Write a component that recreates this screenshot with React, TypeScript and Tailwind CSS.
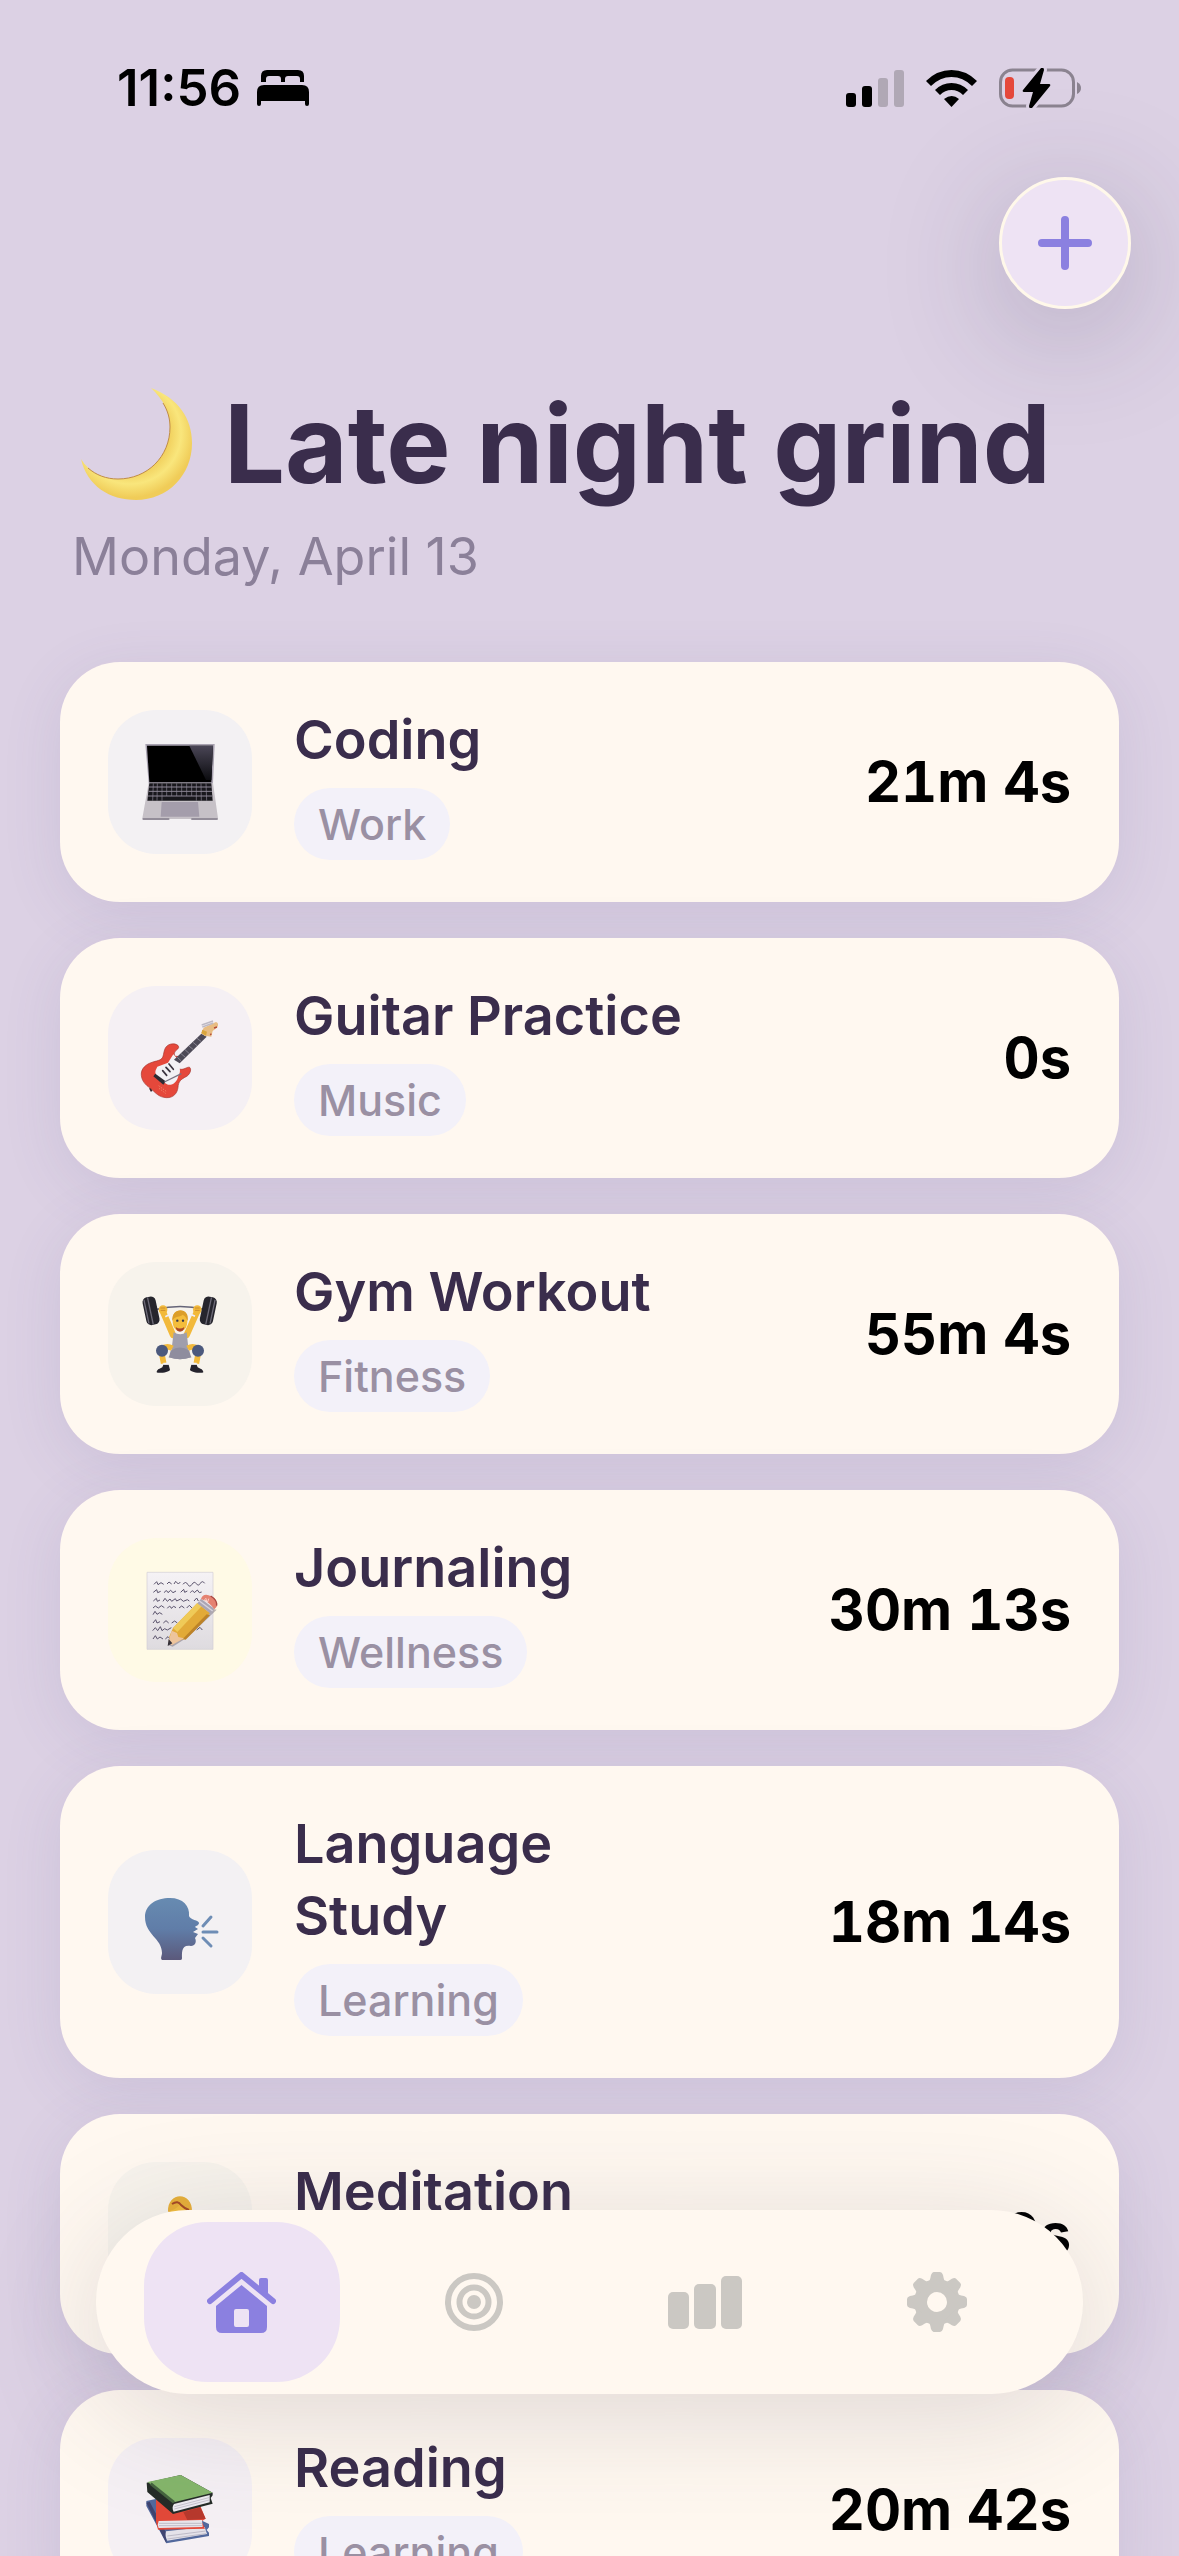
import type { ReactNode } from "react";

function Laptop() {
  return (
    <svg viewBox="24 30 432 432" className="size-full" aria-hidden="true">
      <defs>
        <linearGradient id="glare" x1="0" y1="0" x2="0" y2="1">
          <stop offset="0" stopColor="#4a4656" />
          <stop offset="1" stopColor="#0c0c10" />
        </linearGradient>
      </defs>
      <path d="M136 132h208l-5 118H146z" fill="#a9a3b1" />
      <path d="M141 137h198l-5 110H148z" fill="#000" />
      <path d="M268 137h71l-5 103h-16z" fill="url(#glare)" />
      <path d="M146 249h193l15 106c0 3-2 5-5 5h-72l-6-3h-62l-6 3h-71c-3 0-5-2-5-5z" fill="#c6c1c7" />
      <path d="M148 250h186l4 52H142z" fill="#18171c" />
      <path d="M147 261h188M146 274h190M144 288h192" stroke="#8d8796" strokeWidth="3" />
      <path d="M160 250l-2 52M172 250l-1 52M186 250v52M200 250v38M215 250v38M230 250v38M245 250v38M260 250v38M275 250v38M289 250v52M303 250l1 52M318 250l2 52" stroke="#8d8796" strokeWidth="2" />
      <path d="M185 306h109l4 44H182z" fill="#a49dab" />
      <path d="M128 357h80M274 357h79" stroke="#827c8b" strokeWidth="4" />
    </svg>
  );
}

function Guitar() {
  return (
    <svg viewBox="24 48 432 432" className="size-full" aria-hidden="true">
      <path d="M150 354l5 10M205 360l8 10" stroke="#33272d" strokeWidth="6" />
      <path d="M236 232c0-10-17-13-29-8-15 7-14 22-18 35-4 12-14 12-30 17-22 6-37 21-35 40 2 22 19 33 31 42 11 10 22 24 44 25 22 1 33-14 35-31 1-18 9-24 24-32 11-5 17-20 12-27-5-5-15 5-26 5-14 0-19-13-17-22 2-8 11-8 9-14-2-7-14 3-13-12 1-9 11-10 13-18z" fill="#e5483b" stroke="#a4372f" strokeWidth="2" />
      <path d="M172 290l32-12 16-25 18 20c-3 17 8 30-3 44-3 18-16 29-31 27-17-7-44-28-37-43z" fill="#f2f1f4" />
      <path d="M222 269l82-78 16 9-81 80z" fill="#4d4a57" />
      <path d="M232 262l11 10M243 251l12 10M255 239l12 11M267 228l12 10M279 217l12 10M291 205l12 9" stroke="#918e9b" strokeWidth="2.5" />
      <path d="M304 190l7-17 37-17c9 2 7 15 1 19l-11 8-4 17-20-3z" fill="#e8bd83" />
      <path d="M304 190l3-11 14 6-3 12z" fill="#d9a63d" />
      <path d="M305 165l34-12M307 171l33-12" stroke="#bdb9c4" strokeWidth="4" />
      <path d="M342 174l9-3M331 195l3-4" stroke="#b44a38" strokeWidth="4" />
      <path d="M188 302l12 14M198 292l12 13M207 282l13 16" stroke="#3b3540" strokeWidth="5" strokeLinecap="round" />
      <path d="M166 311l31 23-7 10-30-25z" fill="#2d2b33" />
      <path d="M193 336l51-25" stroke="#777280" strokeWidth="4" />
      <path d="M176 347l24 18M177 355l21 16" stroke="#f08368" strokeWidth="3" strokeDasharray="4 4" />
    </svg>
  );
}

function Lifter() {
  return (
    <svg viewBox="24 66 432 432" className="size-full" aria-hidden="true">
      <path d="M170 208q70-17 142 0" fill="none" stroke="#656478" strokeWidth="5" />
      <path d="M188 213l31 72M292 213l-32 72" stroke="#f2b93b" strokeWidth="19" strokeLinecap="round" />
      <path d="M196 230l10-5M285 229l-10-5" stroke="#eef" strokeWidth="5" />
      <path d="M221 277q20 12 39 0l7 65 8 10q-35 11-70 0l8-10z" fill="#a09eac" />
      <path d="M217 325q-18-10-34 4l8 41M263 325q18-10 34 4l-8 41" fill="none" stroke="#f2b93b" strokeWidth="17" />
      <path d="M212 332q28-19 56 0l5 20q-33 12-66 0z" fill="#8f8d9e" />
      <circle cx="186" cy="332" r="18" fill="#4c597d" />
      <circle cx="294" cy="332" r="18" fill="#4c597d" />
      <path d="M190 374h16l4 15c-1 8-35 12-40 8 0-9 10-11 17-15zM290 374h-16l-4 15c1 8 35 12 40 8 0-9-10-11-17-15z" fill="#25232d" />
      <path d="M190 371h16M274 371h16" stroke="#f4f2f6" strokeWidth="5" />
      <path d="M219 230c1-24 40-24 42 0 4 24-3 43-21 43s-25-20-21-43z" fill="#f4bd3c" />
      <path d="M217 243c-4-42 54-43 46 0-4-8-6-15-15-19-6 8-24 2-31 19z" fill="#dc9e29" />
      <circle cx="232" cy="242" r="3.5" fill="#37384b" />
      <circle cx="249" cy="242" r="3.5" fill="#37384b" />
      <path d="M227 261q13 9 26 0-2 14-13 14t-13-14z" fill="#a9452b" />
      <circle cx="189" cy="209" r="13" fill="#f2b93b" />
      <circle cx="292" cy="209" r="13" fill="#f2b93b" />
      <path d="M181 204h15M182 211h14M285 204h14M285 211h14" stroke="#b97624" strokeWidth="2" />
      <g transform="rotate(-12 153 212)">
        <rect x="133" y="170" width="40" height="85" rx="15" fill="#26252d" />
        <path d="M139 176v72M151 171v83" stroke="#6d6a77" strokeWidth="4" />
      </g>
      <g transform="rotate(12 325 212)">
        <rect x="305" y="170" width="40" height="85" rx="15" fill="#26252d" />
        <path d="M326 171v83M338 176v72" stroke="#6d6a77" strokeWidth="4" />
      </g>
    </svg>
  );
}

function Memo() {
  const rows = [
    "M162 193l8-8 4 9 9-6 8 5 M201 192l6-6 8 6 M222 192l5-8 8 8 6-6 M249 193q8-11 14 0t13 0 13-2 12-1 13 0",
    "M160 217l10-8 3 9 9-4 M193 218q6-12 11 0l8-7 7 7 9-5 M242 217l9-9 3 9 8-4 M271 218q7-11 12 0l9-8 6 8 7-2",
    "M160 243l9-8 3 9 8-4 M189 244l6-9 7 9 8-7 5 7 11-8 4 7 12-6 8 7 12-5 6 4 M282 243l8-9 5 9",
    "M159 264l7-6 9 6 9-7 9 6 M202 265q8-12 12 0l7-6 7 4 M237 264l8-6 8 6 M260 264l8-8 8 8",
    "M159 284l6-10 6 9 8-5 8 5",
    "M159 309l8-10 4 10 9-4 M190 309l8-7 8 7 M215 309l9-6 8 6",
    "M158 332l8-9 7 9 8-12 5 12 8-6 8 4 12-7 M290 330l10-8 7 8",
    "M159 357l7-10 6 10 8-6 9 6 M196 357l8-7 7 7",
  ];
  return (
    <svg viewBox="24 54 432 432" className="size-full" aria-hidden="true">
      <defs>
        <linearGradient id="sheet" x1="0" y1="0" x2="0" y2="1">
          <stop offset="0" stopColor="#f5f2f5" />
          <stop offset="1" stopColor="#dedbdf" />
        </linearGradient>
      </defs>
      <path d="M141 157h198v231H141z" fill="url(#sheet)" stroke="#d2cdd4" strokeWidth="2" />
      <path d={rows.join(" ")} fill="none" stroke="#5a536c" strokeWidth="3" />
      <path d="M218 380l-12-4 130-110 14 3-86 82z" fill="#68606c" opacity=".45" />
      <path d="M219 324l73-75 38 30-73 77-31 8-19-12z" fill="#e2aa38" />
      <path d="M219 324l73-75 13 10-73 77z" fill="#efca58" />
      <path d="M248 357l72-74 10 3-73 73z" fill="#bd8328" />
      <path d="M215 332l16 7 4 12 17 4-37 21-10-9z" fill="#edc49c" />
      <path d="M206 357l11 13-14 8z" fill="#353139" />
      <path d="M292 250l11-14 40 30-13 14z" fill="#aaa5b3" />
      <path d="M298 243l40 30" stroke="#d7d3dd" strokeWidth="4" />
      <path d="M303 237q7-20 31-8 23 14 16 31l-7 8q-17-24-40-31z" fill="#e58271" />
      <path d="M332 228q20 12 18 29" fill="none" stroke="#a94742" strokeWidth="4" />
      <path d="M312 239l11 7M317 234l4 13M326 236l-3 10" stroke="#fae1dd" strokeWidth="2.5" />
    </svg>
  );
}

function SpeakingHead() {
  return (
    <svg viewBox="0 0 144 144" className="size-full" aria-hidden="true">
      <defs>
        <linearGradient id="skull" x1="0" y1="0" x2="0" y2="1">
          <stop offset="0" stopColor="#678bb1" />
          <stop offset=".5" stopColor="#607da8" />
          <stop offset="1" stopColor="#5b597b" />
        </linearGradient>
      </defs>
      <path d="M54 110c-2-2 0-4 0-7 0-15-17-18-17-36 0-12 11-19 25-19 13 0 20 8 19 18 1 4 10 4 10 7 0 2-3 3-4 4l3 2-5 3 5 2-3 4c2 4 0 8-4 8-10-2-9 7-9 12 0 2-1 2-3 2z" fill="url(#skull)" />
      <path d="M95 76l8-9M95 82h14M95 88l8 8" stroke="#6e8db5" strokeWidth="3" strokeLinecap="round" />
    </svg>
  );
}

function Meditator() {
  return (
    <svg viewBox="0 0 144 144" className="size-full" aria-hidden="true">
      <path d="M47 82q3-20 25-20t25 20l-7 18H54z" fill="#8677c9" />
      <path d="M36 99q36-18 72 0 5 10-10 11H46q-15-1-10-11z" fill="#665baf" />
      <path d="M61 49c0-9 4-14 11-14s11 5 11 14-4 16-11 16-11-7-11-16z" fill="#f2bd3f" />
      <path d="M60 50c-1-21 25-21 24 0-4-1-9-3-12-8-3 5-8 6-12 8z" fill="#e8b03a" />
      <path d="M64 42q6-4 9 1 3 3 8 5" fill="none" stroke="#a64a25" strokeWidth="2" />
    </svg>
  );
}

function Books() {
  return (
    <svg viewBox="24 -6 432 432" className="size-full" aria-hidden="true">
      <path d="M139 183l28-6 160 75v10l-7 8 7 8v10l-128 22-60-112z" fill="#53699d" />
      <path d="M139 188l60 122v-30l-50-95z" fill="#3f4470" />
      <path d="M198 274l116-13 7 21-119 20q-8-12-4-28z" fill="#e4e2e9" />
      <path d="M202 288l115-15M202 297l116-16" stroke="#aaa7b6" strokeWidth="2" />
      <path d="M168 178l133 20 16 38-12 8 10 22-141 3-6-24z" fill="#e24939" />
      <path d="M250 216l51-14 16 34-55 4z" fill="#b7392d" />
      <path d="M176 243l130-3 2 21-132 3q-5-10 0-21z" fill="#e9e7ec" />
      <path d="M177 250h128M177 257h129" stroke="#aaa7b6" strokeWidth="2" />
      <path d="M140 128l102-23 96 53v8l-6 8 6 17-119 31-77-66z" fill="#252c28" />
      <path d="M143 126l99-21 96 53-116 29z" fill="#85b66b" />
      <path d="M152 131l70 56" stroke="#466440" strokeWidth="9" />
      <path d="M222 192l107-27v22l-108 28q-7-12 1-23z" fill="#eceaf0" />
      <path d="M223 200l104-27M223 207l104-27" stroke="#b0adbb" strokeWidth="2" />
    </svg>
  );
}

function Moon() {
  return (
    <svg viewBox="0 0 112 112" className="size-28 shrink-0" role="img" aria-label="Crescent moon">
      <defs>
        <radialGradient id="moonlight" cx="50" cy="45" r="68" gradientUnits="userSpaceOnUse">
          <stop offset=".55" stopColor="#f0cd59" />
          <stop offset=".75" stopColor="#f9e67c" />
          <stop offset=".95" stopColor="#f0cc58" />
        </radialGradient>
      </defs>
      <path d="M71 0C98 10 112 30 112 55c0 32-24 57-56 57C30 112 7 98 1 71c9 14 22 20 37 20 29 0 52-22 52-52 0-15-7-28-19-39z" fill="url(#moonlight)" />
      <path d="M83 15c5 8 7 16 7 24 0 30-23 52-52 52-12 0-22-4-30-11" fill="none" stroke="#c08c48" strokeWidth="1" />
    </svg>
  );
}

type Habit = { name: string; tag: string; time: string; tile: string; art: ReactNode };

const habits: Habit[] = [
  { name: "Coding", tag: "Work", time: "21m 4s", tile: "bg-[#f3f1f3]", art: <Laptop /> },
  { name: "Guitar Practice", tag: "Music", time: "0s", tile: "bg-[#f5f0f4]", art: <Guitar /> },
  { name: "Gym Workout", tag: "Fitness", time: "55m 4s", tile: "bg-[#f7f3ec]", art: <Lifter /> },
  { name: "Journaling", tag: "Wellness", time: "30m 13s", tile: "bg-[#fffae6]", art: <Memo /> },
  { name: "Language Study", tag: "Learning", time: "18m 14s", tile: "bg-[#f3f1f3]", art: <SpeakingHead /> },
  { name: "Meditation", tag: "Wellness", time: "0s", tile: "bg-[#f7f3ec]", art: <Meditator /> },
  { name: "Reading", tag: "Learning", time: "20m 42s", tile: "bg-[#f5f0f4]", art: <Books /> },
];

function HabitCard({ habit }: { habit: Habit }) {
  return (
    <li className="flex items-center rounded-[60px] bg-[#fff8f0] px-12 py-[42px] shadow-[0_12px_60px_rgba(90,85,140,0.12)]">
      <div className={`size-36 shrink-0 overflow-hidden rounded-[48px] ${habit.tile}`}>{habit.art}</div>
      <div className="ml-[42px] flex max-w-[400px] flex-1 flex-col items-start gap-3">
        <h2 className="text-[54px] leading-[72px] font-semibold text-[#3a2d4c]">{habit.name}</h2>
        <span className="rounded-full bg-[#f3f1f9] px-6 text-[43px] leading-[72px] font-medium text-[#9a90a3]">{habit.tag}</span>
      </div>
      <p className="ml-auto text-[56px] leading-[72px] font-bold whitespace-nowrap text-black tabular-nums">{habit.time}</p>
    </li>
  );
}

function StatusBar() {
  return (
    <div className="flex h-[177px] items-start justify-between pt-[58px] pr-[98px] pl-[117px]">
      <div className="flex h-[60px] items-center gap-4">
        <span className="text-[51px] leading-[60px] font-semibold text-black">11:56</span>
        <svg viewBox="0 0 52 36" className="h-9 w-[52px]" aria-label="Sleep focus" role="img">
          <path d="M4 12V6q0-6 6-6h31q6 0 6 6v6h-4V9q0-3-3-3h-9q-3 0-3 3v3h-4V9q0-3-3-3h-9q-3 0-3 3v3zM7 15h38q7 0 7 7v12q0 2-2 2t-2-2v-3H4v3q0 2-2 2t-2-2V22q0-7 7-7z" />
        </svg>
      </div>
      <div className="flex h-[60px] items-center gap-[22px]">
        <svg viewBox="0 0 58 38" className="h-[38px] w-[58px]" aria-label="Cellular signal" role="img">
          <rect x="0" y="24" width="10" height="14" rx="3" />
          <rect x="16" y="17" width="10" height="21" rx="3" />
          <rect x="32" y="9" width="10" height="29" rx="3" fill="#b0a8b5" />
          <rect x="48" y="1" width="10" height="37" rx="3" fill="#b0a8b5" />
        </svg>
        <svg viewBox="0 0 51 37" className="h-[37px] w-[51px]" aria-label="Wi-Fi" role="img">
          <path d="M0 11Q11 0 25.500 0T51 11l-5 5Q37 7 25.500 7T5 16zM9 20q7-7 16.500-7T42 20l-5 5q-5-5-11.500-5T14 25zM18 29q8-6 15 0l-7.500 8z" />
        </svg>
        <svg viewBox="0 0 82 40" className="h-10 w-[82px]" aria-label="Battery charging" role="img">
          <rect x="1.500" y="2" width="73" height="36" rx="12" fill="none" stroke="#8b8390" strokeWidth="3" />
          <path d="M78 14q4 2 4 6t-4 6z" fill="#8b8390" />
          <rect x="6" y="9" width="9" height="22" rx="4" fill="#e5483b" />
          <path d="M42 0q3-1 3 2l-4 14h9q2 0 1 2L33 40q-3 1-3-2l4-14h-9q-2 0-1-2z" stroke="#dcd1e4" strokeWidth="6" strokeLinejoin="round" fill="#dcd1e4" />
          <path d="M42 0q3-1 3 2l-4 14h9q2 0 1 2L33 40q-3 1-3-2l4-14h-9q-2 0-1-2z" />
        </svg>
      </div>
    </div>
  );
}

function HomeIcon() {
  return (
    <svg viewBox="0 0 69 61" className="h-[61px] w-[69px]" fill="currentColor" aria-hidden="true">
      <path d="M34.500 13L60 34v21q0 6-6 6H15q-6 0-6-6V34zM29 37q-2 0-2 2v14q0 2 2 2h11q2 0 2-2V39q0-2-2-2z" fillRule="evenodd" />
      <path d="M3 29L34.500 3 66 29" fill="none" stroke="currentColor" strokeWidth="6" strokeLinecap="round" strokeLinejoin="round" />
      <path d="M52 18V8q0-2 2-2h5q2 0 2 2v17z" />
    </svg>
  );
}

function TargetIcon() {
  return (
    <svg viewBox="0 0 58 58" className="size-[58px]" fill="none" stroke="currentColor" strokeWidth="6" aria-hidden="true">
      <circle cx="29" cy="29" r="26" />
      <circle cx="29" cy="29" r="14.500" />
      <circle cx="29" cy="29" r="7" fill="currentColor" stroke="none" />
    </svg>
  );
}

function BarsIcon() {
  return (
    <svg viewBox="0 0 74 53" className="h-[53px] w-[74px]" fill="currentColor" aria-hidden="true">
      <rect x="0" y="16" width="21" height="37" rx="5" />
      <rect x="26" y="8" width="22" height="45" rx="5" />
      <rect x="53" y="0" width="21" height="53" rx="5" />
    </svg>
  );
}

function GearIcon() {
  return (
    <svg viewBox="-30 -30 60 60" className="size-[60px]" fill="currentColor" aria-hidden="true">
      <circle r="16.500" fill="none" stroke="currentColor" strokeWidth="13" />
      {[0, 45, 90, 135, 180, 225, 270, 315].map((angle) => (
        <path key={angle} d="M-9-19Q-7-21-6-27Q-5-30-3-30H3Q5-30 6-27Q7-21 9-19z" transform={`rotate(${angle})`} />
      ))}
    </svg>
  );
}

const tabs = [
  { label: "Home", icon: <HomeIcon />, active: true },
  { label: "Goals", icon: <TargetIcon />, active: false },
  { label: "Stats", icon: <BarsIcon />, active: false },
  { label: "Settings", icon: <GearIcon />, active: false },
];

export default function App() {
  return (
    <div className="h-screen overflow-x-hidden overflow-y-auto bg-[#dcd1e4] font-['Inter',sans-serif] [scrollbar-width:none]">
      <StatusBar />
      <header>
        <div className="flex justify-end pr-12">
          <button type="button" aria-label="Add habit" className="flex size-[132px] items-center justify-center rounded-full border-3 border-[#fff8ea] bg-[#eee3f4] text-[#8b80e0] shadow-[0_24px_120px_rgba(50,45,80,0.26)]">
            <svg viewBox="0 0 56 56" className="size-14" fill="none" stroke="currentColor" strokeWidth="8" strokeLinecap="round" aria-hidden="true">
              <path d="M5 28h46M28 5v46" />
            </svg>
          </button>
        </div>
        <div className="px-[72px] pt-[67px]">
          <h1 className="flex items-center gap-8 pl-2 text-[108px] leading-[136px] font-bold whitespace-nowrap text-[#3a2d4c]">
            <Moon />
            <span>Late night grind</span>
          </h1>
          <p className="mt-3 text-[52px] leading-[66px] text-[#8b8099]">Monday, April 13</p>
        </div>
      </header>
      <main className="px-[60px] pt-[72px] pb-[400px]">
        <ul className="flex flex-col gap-9">
          {habits.map((habit) => (
            <HabitCard key={habit.name} habit={habit} />
          ))}
        </ul>
      </main>
      <nav aria-label="Main" className="fixed inset-x-24 bottom-[162px] flex justify-between gap-9 rounded-full bg-[#fff8f0] px-12 py-3 shadow-[0_20px_120px_rgba(60,55,80,0.17)]">
        {tabs.map((tab) => (
          <button
            key={tab.label}
            type="button"
            aria-label={tab.label}
            aria-current={tab.active ? "page" : undefined}
            className={`flex h-40 flex-1 items-center justify-center rounded-[64px] ${tab.active ? "bg-[#eee3f4] text-[#8b80e0]" : "text-[#cbc8c3]"}`}
          >
            {tab.icon}
          </button>
        ))}
      </nav>
    </div>
  );
}
